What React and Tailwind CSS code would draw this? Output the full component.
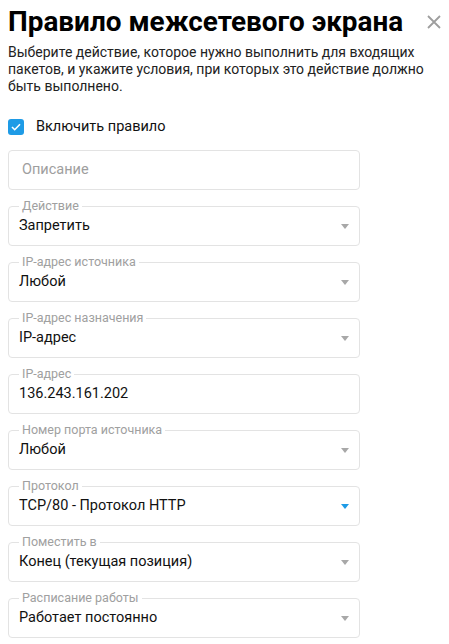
const fields = [
  { label: "Действие", value: "Запретить" },
  { label: "IP-адрес источника", value: "Любой" },
  { label: "IP-адрес назначения", value: "IP-адрес" },
  { label: "IP-адрес", value: "136.243.161.202", input: true },
  { label: "Номер порта источника", value: "Любой" },
  { label: "Протокол", value: "TCP/80 - Протокол HTTP", active: true },
  { label: "Поместить в", value: "Конец (текущая позиция)" },
  { label: "Расписание работы", value: "Работает постоянно" },
];

function Field({ label, value, input, active }) {
  return (
    <div className="relative flex h-[40px] w-[352px] items-center justify-between rounded-[4px] border border-[#e3e3e3] pl-[10px] pr-[10px] pt-[1px]">
      <span className="absolute -top-[8px] left-[10px] bg-white px-[3px] text-[12.5px] leading-[14px] text-[#a0a0a0]">
        {label}
      </span>
      <span className="text-[14.5px] text-[#111]">{value}</span>
      {!input && (
        <svg width="8" height="5" viewBox="0 0 8 5">
          <path d="M0 0h8L4 5z" fill={active ? "#1e9be6" : "#a8a8a8"} />
        </svg>
      )}
    </div>
  );
}

export default function App() {
  return (
    <div className="min-h-[644px] w-[449px] bg-white px-[8px] font-['Roboto',sans-serif]">
      <div className="flex items-start justify-between pt-[4px]">
        <h1 className="text-[27.9px] font-bold leading-[36px] text-black">Правило межсетевого экрана</h1>
        <button className="-mr-[2px] mt-[9px] text-[#9e9e9e]">
          <svg width="18" height="18" viewBox="0 0 18 18">
            <path d="M3 3l12 12M15 3L3 15" stroke="currentColor" strokeWidth="1.8" />
          </svg>
        </button>
      </div>
      <p className="mt-[4px] text-[14px] leading-[17px] text-[#222]">
        Выберите действие, которое нужно выполнить для входящих пакетов, и укажите условия, при которых это действие должно быть выполнено.
      </p>
      <label className="mt-[21px] flex items-center gap-[12px]">
        <span className="flex h-[16px] w-[16px] items-center justify-center rounded-[3px] bg-[#1e9be6]">
          <svg width="10" height="8" viewBox="0 0 10 8">
            <path d="M1 4l2.7 2.7L9 1.3" stroke="white" strokeWidth="1.6" fill="none" />
          </svg>
        </span>
        <span className="text-[14.5px] text-[#111]">Включить правило</span>
      </label>
      <div className="mt-[12px] flex h-[40px] w-[352px] items-center rounded-[4px] border border-[#e3e3e3] px-[13px]">
        <span className="text-[14.5px] text-[#9e9e9e]">Описание</span>
      </div>
      <div className="mt-[16px] flex flex-col gap-[16px]">
        {fields.map((f) => (
          <Field key={f.label} {...f} />
        ))}
      </div>
    </div>
  );
}
